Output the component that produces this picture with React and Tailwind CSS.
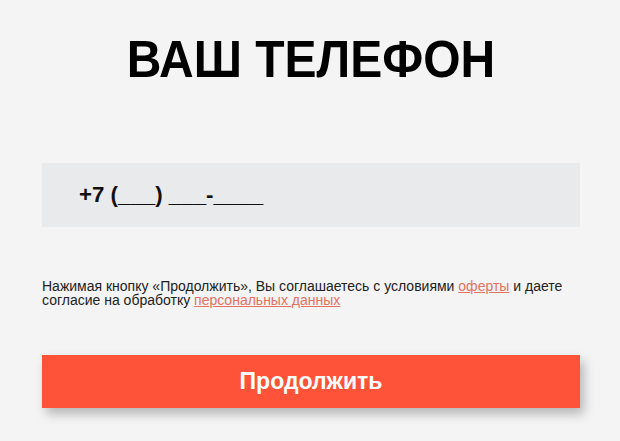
import React from 'react';

const App = () => {
  return (
    <div className="min-h-screen w-full bg-[#f4f4f4] pl-[42px] pr-[40px] pt-[30px] font-['Liberation_Sans',Arial,sans-serif]">
      <h1 className="origin-center scale-y-[1.08] text-center text-[48px] font-bold leading-[60px] text-black">ВАШ ТЕЛЕФОН</h1>

      <div className="mt-[73px] flex h-[64px] items-center bg-[#e9eaec] pl-[37px]">
        <span className="text-[22.3px] font-bold text-[#111]">+7 (___) ___-____</span>
      </div>

      <p className="mt-[52px] text-[14px] leading-[14px] text-[#222]">
        Нажимая кнопку «Продолжить», Вы соглашаетесь с условиями{' '}
        <a href="#" className="text-[#e5715f] underline">оферты</a> и даете согласие на обработку{' '}
        <a href="#" className="text-[#e5715f] underline">персональных данных</a>
      </p>

      <button className="mt-[48px] flex h-[53px] w-full items-center justify-center bg-[#ff5339] text-[23px] font-bold text-white shadow-[4px_6px_10px_rgba(0,0,0,0.25)]">
        Продолжить
      </button>
    </div>
  );
};

export default App;
